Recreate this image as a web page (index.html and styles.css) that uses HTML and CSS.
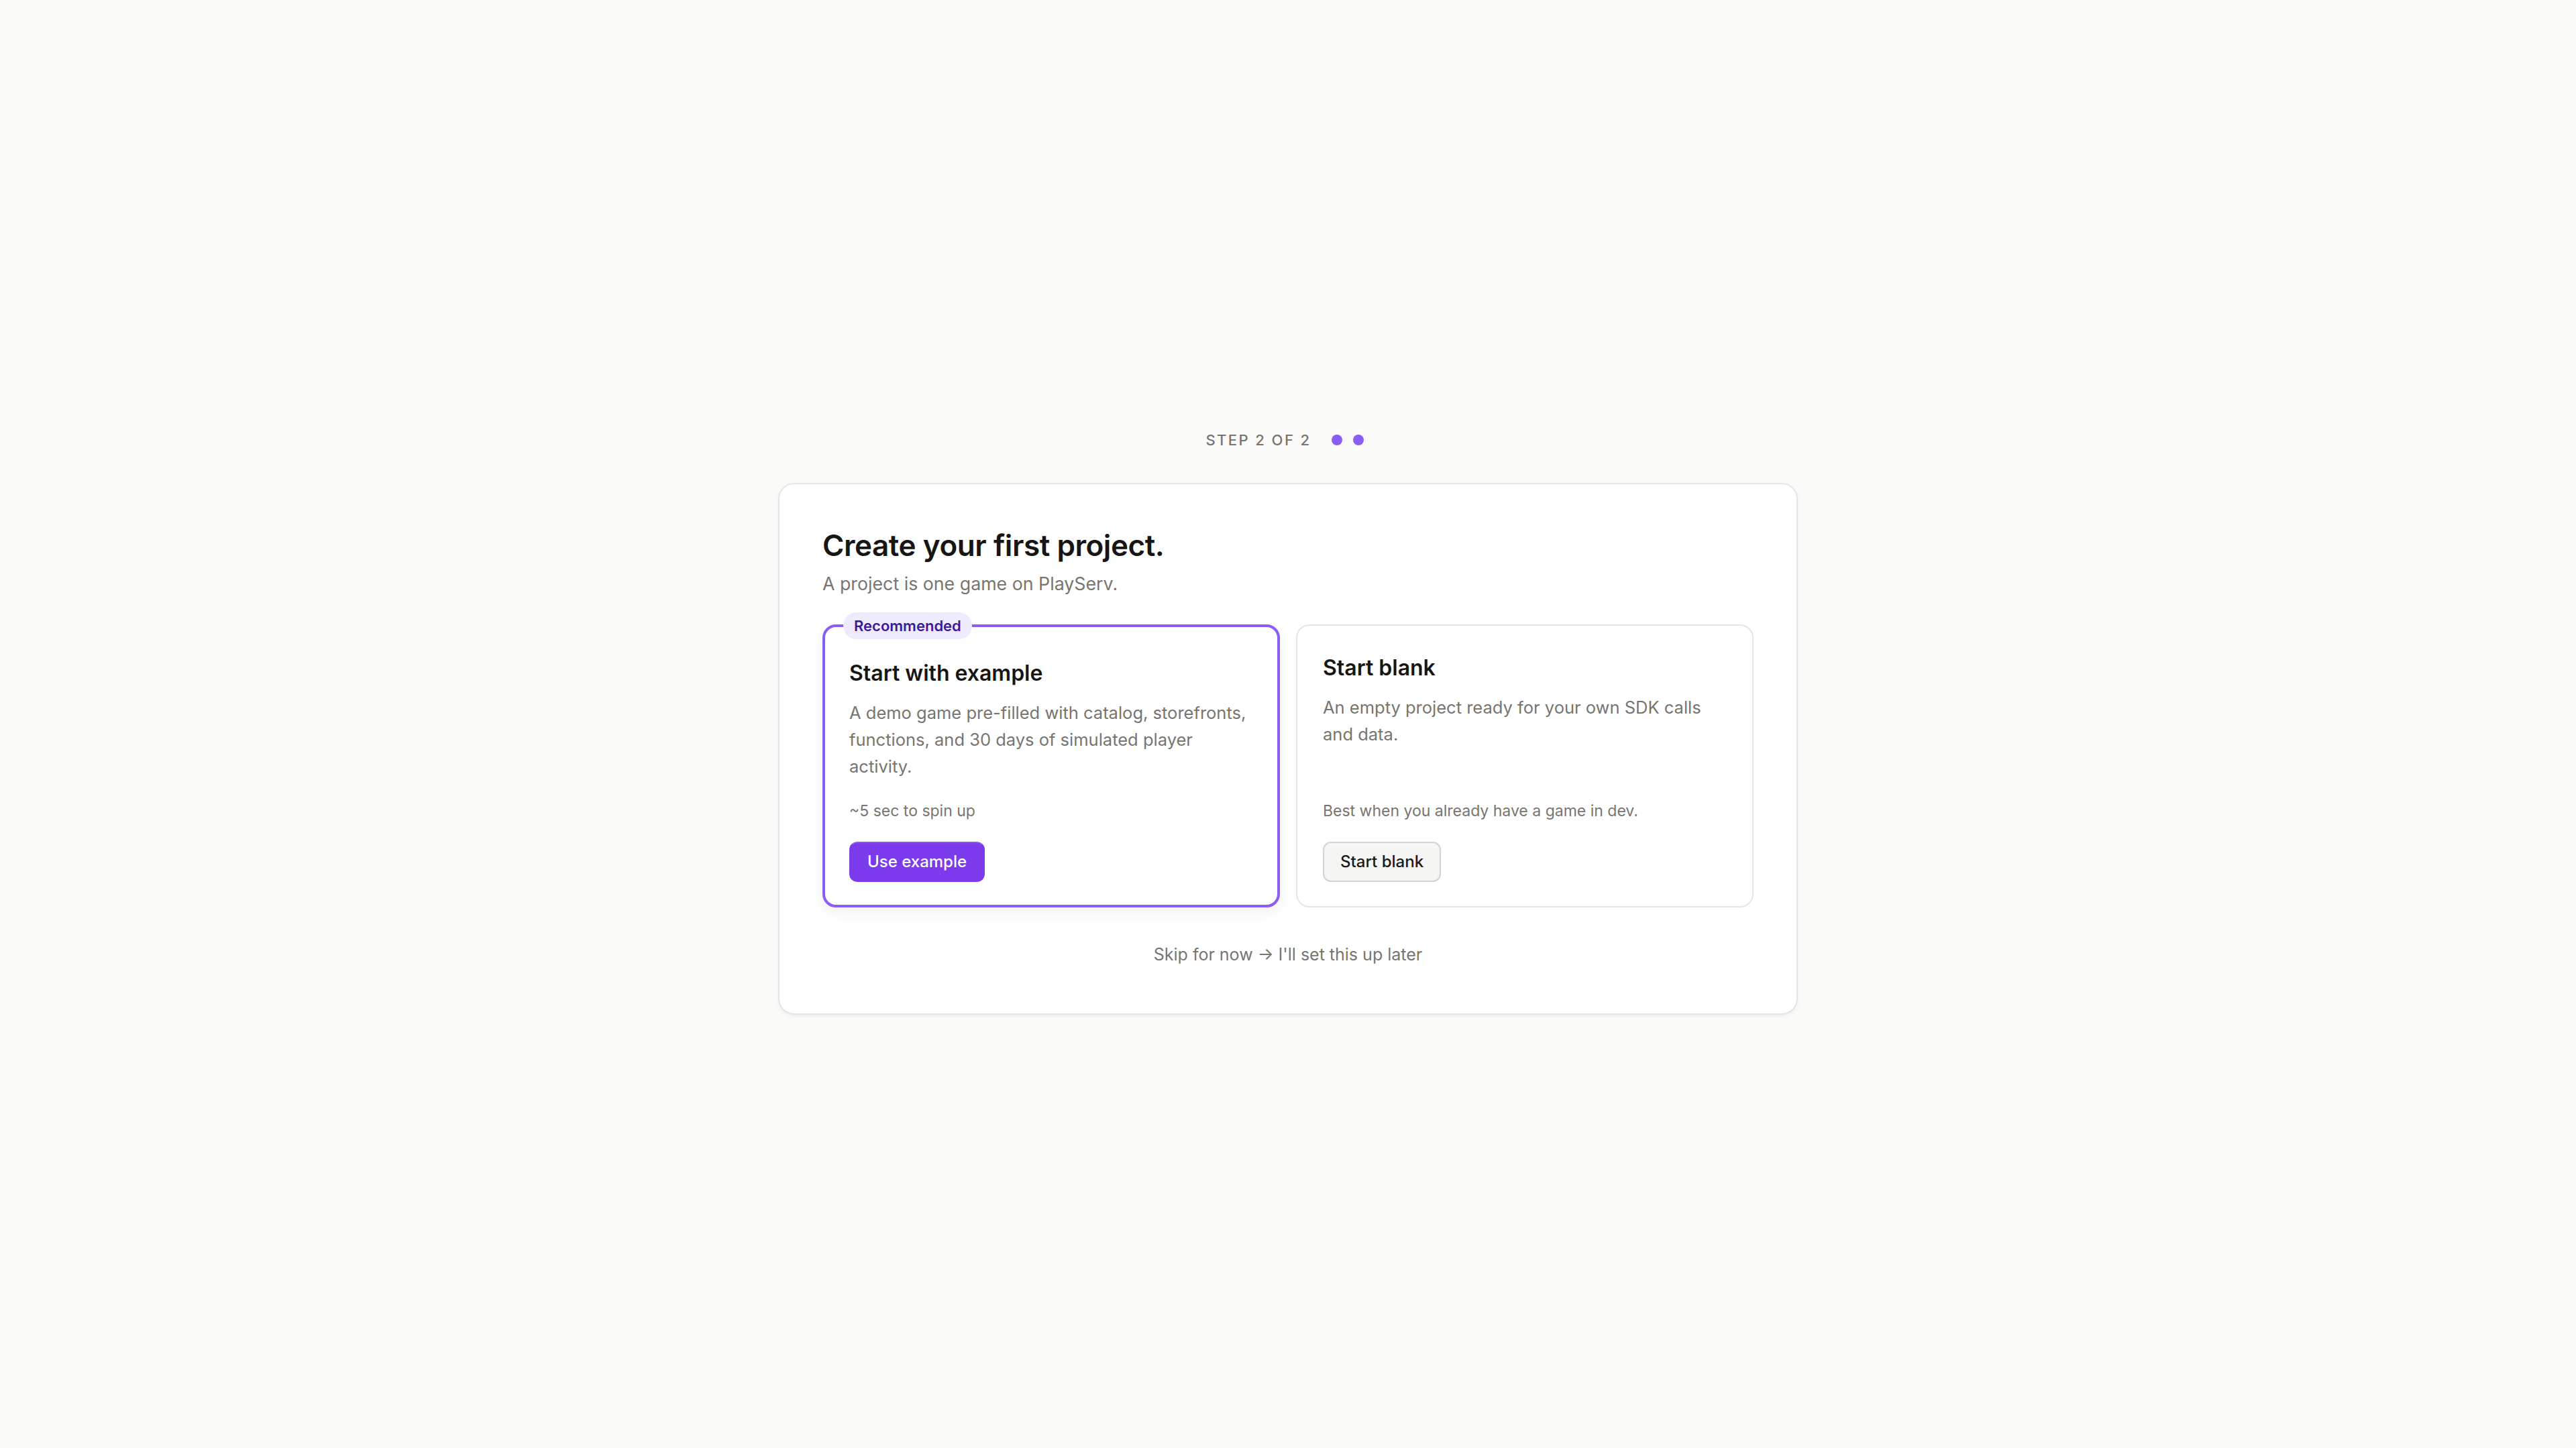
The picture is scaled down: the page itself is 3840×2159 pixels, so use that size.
FILE: index.html
```html
<!DOCTYPE html>
<html lang="en">
<head>
<meta charset="utf-8">
<title>Create your first project · PlayServ</title>
<link rel="stylesheet" href="styles.css">
</head>
<body>
<main class="onboard">
  <div class="step">
    <span class="step-label">STEP 2 OF 2</span>
    <span class="dots"><span class="dot"></span><span class="dot"></span></span>
  </div>
  <section class="panel">
    <h1 class="panel-title">Create your first project.</h1>
    <p class="panel-sub">A project is one game on PlayServ.</p>
    <div class="options">
      <div class="option option--selected">
        <span class="badge">Recommended</span>
        <h2 class="option-title">Start with example</h2>
        <p class="option-desc">A demo game pre-filled with catalog, storefronts, functions, and 30 days of simulated player activity.</p>
        <div class="option-foot">
          <p class="option-note">~5 sec to spin up</p>
          <button class="btn btn--primary" type="button">Use example</button>
        </div>
      </div>
      <div class="option">
        <h2 class="option-title">Start blank</h2>
        <p class="option-desc">An empty project ready for your own SDK calls and data.</p>
        <div class="option-foot">
          <p class="option-note">Best when you already have a game in dev.</p>
          <button class="btn btn--secondary" type="button">Start blank</button>
        </div>
      </div>
    </div>
    <p class="skip"><a class="skip-link" href="#">Skip for now → I'll set this up later</a></p>
  </section>
</main>
</body>
</html>
```

FILE: styles.css
```css
* {
  box-sizing: border-box;
}

html, body {
  margin: 0;
  padding: 0;
}

body {
  background: #fafaf9;
  font-family: Inter, "Noto Sans", "Liberation Sans", sans-serif;
  color: #1c1917;
  -webkit-font-smoothing: antialiased;
}

.onboard {
  min-height: 100vh;
  display: flex;
  flex-direction: column;
  align-items: center;
  justify-content: center;
  padding-bottom: 6px;
}

.step {
  display: flex;
  align-items: center;
  gap: 30px;
  height: 32px;
  margin-bottom: 48px;
  padding-right: 10px;
}

.step-label {
  font-size: 22px;
  line-height: 32px;
  font-weight: 500;
  letter-spacing: 0.11em;
  color: #78756e;
}

.dots {
  display: flex;
  gap: 16px;
}

.dot {
  width: 16px;
  height: 16px;
  border-radius: 50%;
  background: #8b5cf6;
}

.panel {
  width: 1520px;
  background: #ffffff;
  border: 2px solid #e7e5e4;
  border-radius: 24px;
  padding: 64px 64px 70px;
  box-shadow: 0 2px 6px rgba(28, 25, 23, 0.05);
}

.panel-title {
  margin: 0;
  font-size: 44px;
  line-height: 54px;
  font-weight: 600;
  letter-spacing: -0.01em;
  color: #171614;
}

.panel-sub {
  margin: 10px 0 0;
  font-size: 26.75px;
  line-height: 40px;
  color: #78756e;
}

.options {
  margin-top: 41px;
  display: grid;
  grid-template-columns: 1fr 1fr;
  gap: 24px;
}

.option {
  position: relative;
  display: flex;
  flex-direction: column;
  background: #ffffff;
  border: 2px solid #e7e5e4;
  border-radius: 20px;
  padding: 42px 38px 36px;
}

.option--selected {
  border: 4px solid #8b5cf6;
  padding: 48px 36px 34px;
  box-shadow: 0 8px 24px rgba(28, 25, 23, 0.06);
}

.badge {
  position: absolute;
  top: -22px;
  left: 27px;
  padding: 0 16px;
  height: 40px;
  line-height: 40px;
  border-radius: 20px;
  background: #efebfe;
  color: #3b1a96;
  font-size: 22px;
  font-weight: 600;
}

.option-title {
  margin: 0;
  font-size: 32px;
  line-height: 42px;
  font-weight: 600;
  color: #171614;
}

.option-desc {
  margin: 18px 0 0;
  font-size: 25.5px;
  line-height: 40px;
  color: #78756e;
}

.option-foot {
  margin-top: auto;
  padding-top: 28px;
  display: flex;
  flex-direction: column;
  align-items: flex-start;
}

.option-note {
  margin: 0 0 28px;
  font-size: 23px;
  line-height: 36px;
  color: #78756e;
}

.btn {
  height: 60px;
  padding: 0 24px;
  border-radius: 12px;
  font-family: inherit;
  font-size: 24px;
  font-weight: 500;
  line-height: 1;
  cursor: pointer;
}

.btn--primary {
  background: #7c3aed;
  border: 2px solid #7c3aed;
  border-top-color: #8d55f5;
  color: #ffffff;
  padding: 0 25px;
}

.btn--secondary {
  background: #f5f5f4;
  border: 2px solid #d6d3d1;
  color: #1c1917;
}

.skip {
  margin: 52px 0 0;
  text-align: center;
  font-size: 25px;
  line-height: 36px;
}

.skip-link {
  color: #78756e;
  text-decoration: none;
}
```
